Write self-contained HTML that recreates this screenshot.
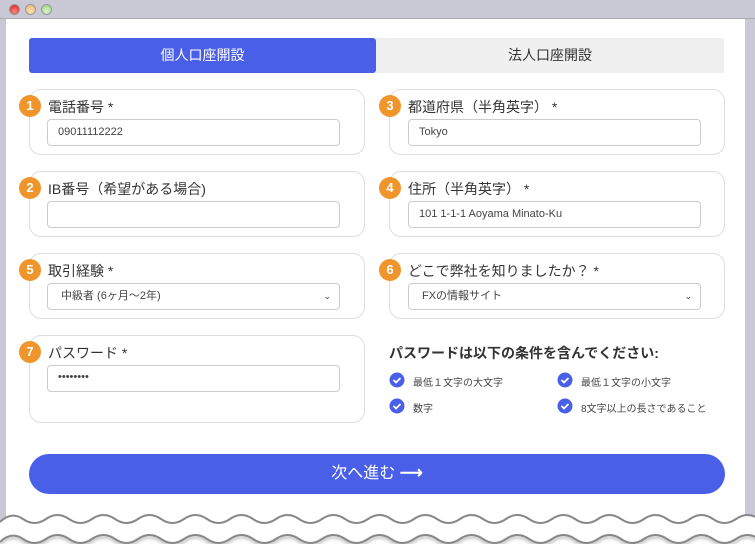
<!DOCTYPE html>
<html><head><meta charset="utf-8"><style>
*{box-sizing:border-box;margin:0;padding:0}
body{width:755px;height:550px;overflow:hidden;background:#fff;font-family:"Liberation Sans","Noto Sans CJK JP",sans-serif;position:relative}
.frame{position:absolute;left:0;top:0;width:755px;height:525px;background:#c9c9d5}
.bar{position:absolute;left:0;top:0;width:755px;height:19px;border-bottom:1px solid #a9a9b3}
.dot{position:absolute;top:4px;width:11px;height:11px;border-radius:50%;border:1px solid #999}
.content{position:absolute;left:6px;top:19px;width:739px;height:510px;background:#fff}
.tab{position:absolute;top:38px;height:35px;line-height:35px;text-align:center;font-size:14px}
.card{position:absolute;border:1px solid #ddd;border-radius:12px;background:#fff}
.badge{position:absolute;width:22px;height:22px;border-radius:50%;background:#f0952b;color:#fff;font-weight:bold;font-size:13px;text-align:center;line-height:22px}
.lbl{position:absolute;font-size:14px;color:#333}
.inp{position:absolute;height:27px;border:1px solid #ccc;border-radius:4px;background:#fff;font-size:11px;color:#444;line-height:25px;padding-left:10px}
.ct{position:absolute;font-size:10px;color:#444}
</style></head><body>
<div class="frame"><div class="bar"></div>
<div class="dot" style="left:9px;background:radial-gradient(circle at 50% 70%,#f88,#d11)"></div>
<div class="dot" style="left:25px;background:radial-gradient(circle at 50% 70%,#fde3bf,#f0b060)"></div>
<div class="dot" style="left:41px;background:radial-gradient(circle at 50% 70%,#dff5d3,#8fd070)"></div>
</div>
<div class="content"></div>
<div class="tab" style="left:29px;width:347px;background:#4a5fe8;color:#fff;border-radius:3px">個人口座開設</div>
<div class="tab" style="left:376px;width:348px;background:#f0f0f0;color:#333">法人口座開設</div>

<div class="card" style="left:29px;top:89px;width:336px;height:66px"></div>
<div class="badge" style="left:19px;top:95px">1</div>
<div class="lbl" style="left:48px;top:97px">電話番号 *</div>
<div class="inp" style="left:47px;top:119px;width:293px">09011112222</div>

<div class="card" style="left:389px;top:89px;width:336px;height:66px"></div>
<div class="badge" style="left:379px;top:95px">3</div>
<div class="lbl" style="left:408px;top:97px">都道府県（半角英字） *</div>
<div class="inp" style="left:408px;top:119px;width:293px">Tokyo</div>

<div class="card" style="left:29px;top:171px;width:336px;height:66px"></div>
<div class="badge" style="left:19px;top:177px">2</div>
<div class="lbl" style="left:48px;top:179px">IB番号（希望がある場合)</div>
<div class="inp" style="left:47px;top:201px;width:293px"></div>

<div class="card" style="left:389px;top:171px;width:336px;height:66px"></div>
<div class="badge" style="left:379px;top:177px">4</div>
<div class="lbl" style="left:408px;top:179px">住所（半角英字） *</div>
<div class="inp" style="left:408px;top:201px;width:293px">101 1-1-1 Aoyama Minato-Ku</div>

<div class="card" style="left:29px;top:253px;width:336px;height:66px"></div>
<div class="badge" style="left:19px;top:259px">5</div>
<div class="lbl" style="left:48px;top:261px">取引経験 *</div>
<div class="inp" style="left:47px;top:283px;width:293px;padding-left:13px">中級者 (6ヶ月〜2年)<span style="position:absolute;right:8px;font-size:9px">⌄</span></div>

<div class="card" style="left:389px;top:253px;width:336px;height:66px"></div>
<div class="badge" style="left:379px;top:259px">6</div>
<div class="lbl" style="left:408px;top:261px">どこで弊社を知りましたか？ *</div>
<div class="inp" style="left:408px;top:283px;width:293px;padding-left:13px">FXの情報サイト<span style="position:absolute;right:8px;font-size:9px">⌄</span></div>

<div class="card" style="left:29px;top:335px;width:336px;height:88px"></div>
<div class="badge" style="left:19px;top:341px">7</div>
<div class="lbl" style="left:48px;top:343px">パスワード *</div>
<div class="inp" style="left:47px;top:365px;width:293px;line-height:22px">••••••••</div>

<div style="position:absolute;left:389px;top:343px;font-size:14px;font-weight:bold;color:#333">パスワードは以下の条件を含んでください:</div>
<svg style="position:absolute;left:0;top:0" width="755" height="550">
<g fill="#4a5fe8"><circle cx="397" cy="380" r="7.5"/><circle cx="565" cy="380" r="7.5"/><circle cx="397" cy="406" r="7.5"/><circle cx="565" cy="406" r="7.5"/></g>
<g fill="none" stroke="#fff" stroke-width="1.8"><path d="M393.5 380l2.5 2.5 4.5-4.5"/><path d="M561.5 380l2.5 2.5 4.5-4.5"/><path d="M393.5 406l2.5 2.5 4.5-4.5"/><path d="M561.5 406l2.5 2.5 4.5-4.5"/></g>
</svg>
<div class="ct" style="left:413px;top:374px">最低１文字の大文字</div>
<div class="ct" style="left:581px;top:374px">最低１文字の小文字</div>
<div class="ct" style="left:413px;top:400px">数字</div>
<div class="ct" style="left:581px;top:400px">8文字以上の長さであること</div>

<div style="position:absolute;left:29px;top:454px;width:696px;height:40px;border-radius:20px;background:#4a5fe8;color:#fff;font-size:16px;text-align:center;line-height:40px">次へ進む <b>⟶</b></div>

<svg style="position:absolute;left:0;top:508px" width="755" height="42">
<defs><filter id="s"><feDropShadow dx="0" dy="2" stdDeviation="1.5" flood-color="#000" flood-opacity="0.35"/></filter></defs>
<path d="M0 14 Q11.5 3 23 11 T46 11 T69 11 T92 11 T115 11 T138 11 T161 11 T184 11 T207 11 T230 11 T253 11 T276 11 T299 11 T322 11 T345 11 T368 11 T391 11 T414 11 T437 11 T460 11 T483 11 T506 11 T529 11 T552 11 T575 11 T598 11 T621 11 T644 11 T667 11 T690 11 T713 11 T736 11 T759 11 L755 42 L0 42Z" fill="#fff"/>
<path d="M0 14 Q11.5 3 23 11 T46 11 T69 11 T92 11 T115 11 T138 11 T161 11 T184 11 T207 11 T230 11 T253 11 T276 11 T299 11 T322 11 T345 11 T368 11 T391 11 T414 11 T437 11 T460 11 T483 11 T506 11 T529 11 T552 11 T575 11 T598 11 T621 11 T644 11 T667 11 T690 11 T713 11 T736 11 T759 11" fill="none" stroke="#888" stroke-width="2"/>
<path d="M0 34 Q11.5 23 23 31 T46 31 T69 31 T92 31 T115 31 T138 31 T161 31 T184 31 T207 31 T230 31 T253 31 T276 31 T299 31 T322 31 T345 31 T368 31 T391 31 T414 31 T437 31 T460 31 T483 31 T506 31 T529 31 T552 31 T575 31 T598 31 T621 31 T644 31 T667 31 T690 31 T713 31 T736 31 T759 31" fill="none" stroke="#888" stroke-width="2" filter="url(#s)"/>
</svg>
</body></html>
